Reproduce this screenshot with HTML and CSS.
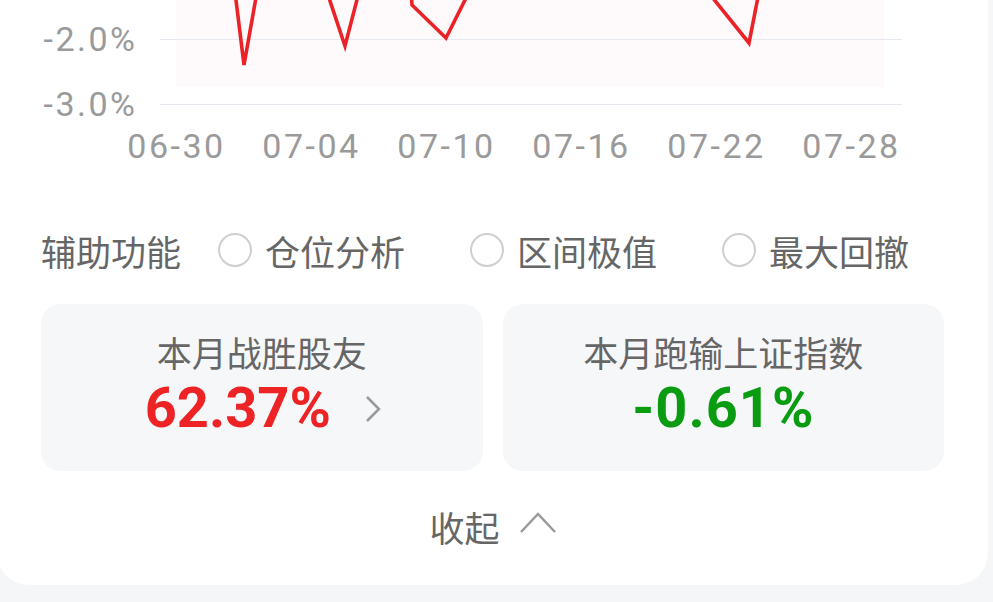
FILE: index.html
```html
<!DOCTYPE html>
<html lang="zh-CN">

<head>
    <meta charset="UTF-8">
    <meta name="viewport" content="width=device-width, initial-scale=1.0">
    <title>本月收益</title>
    <link rel="stylesheet" href="styles.css">
</head>

<body>
    <div class="panel">
        <div class="chart">
            <div class="yaxis">
                <span>-2.0%</span>
                <span>-3.0%</span>
            </div>
            <svg class="plot" width="742" height="118" viewBox="0 0 742 118">
                <rect x="16" y="0" width="708" height="87" fill="#fefafb" />
                <line x1="0" y1="39.5" x2="742" y2="39.5" stroke="#e6e8ef" stroke-width="1" />
                <line x1="0" y1="104.5" x2="742" y2="104.5" stroke="#e6e8ef" stroke-width="1" />
                <g fill="none" stroke="#ea2328" stroke-width="3.6" stroke-linejoin="miter">
                    <polyline points="75,-8 84,65 97,-8" />
                    <polyline points="167,-8 185,46 199,-8" />
                    <polyline points="251,-8 252,5 286,38 309,-8" />
                    <polyline points="548,-8 589,43 599,-8" />
                </g>
            </svg>
        </div>
        <div class="xaxis">
            <span>06-30</span>
            <span>07-04</span>
            <span>07-10</span>
            <span>07-16</span>
            <span>07-22</span>
            <span>07-28</span>
        </div>

        <div class="tools">
            <span class="tools_label">辅助功能</span>
            <label class="option"><i class="radio"></i>仓位分析</label>
            <label class="option"><i class="radio"></i>区间极值</label>
            <label class="option"><i class="radio"></i>最大回撤</label>
        </div>

        <div class="stats">
            <div class="stat">
                <div class="stat_title">本月战胜股友</div>
                <div class="stat_value up">
                    62.37%
                    <svg class="arrow" width="16" height="28" viewBox="0 0 16 28">
                        <polyline points="2,2 14,14 2,26" fill="none" stroke="#999" stroke-width="2.5" />
                    </svg>
                </div>
            </div>
            <div class="stat">
                <div class="stat_title">本月跑输上证指数</div>
                <div class="stat_value down">-0.61%</div>
            </div>
        </div>

        <div class="fold">
            收起
            <svg width="36" height="22" viewBox="0 0 36 22">
                <polyline points="1,20 18,2 35,20" fill="none" stroke="#999" stroke-width="2.5" />
            </svg>
        </div>
    </div>
</body>

</html>
```

FILE: styles.css
```css
* {
    margin: 0;
    padding: 0;
    box-sizing: border-box;
}

body {
    background-color: #f5f6f8;
    font-family: "Noto Sans CJK SC", "Noto Sans", sans-serif;
    overflow: hidden;
}

.panel {
    width: 991px;
    margin-left: -3px;
    padding: 0 44px 34px;
    background-color: #fff;
    border-radius: 0 0 32px 32px;
}

/* chart */

.chart {
    display: flex;
    height: 118px;
}

.yaxis {
    width: 94px;
    padding-top: 6.5px;
    display: flex;
    flex-direction: column;
    align-items: flex-end;
    font-family: Roboto, sans-serif;
    font-size: 34px;
    letter-spacing: 2.5px;
    color: #9a9a9a;
}

.yaxis span {
    line-height: 65px;
    margin-right: -2.5px;
}

.plot {
    display: block;
    margin-left: 25px;
    overflow: visible;
}

.xaxis {
    display: flex;
    padding-left: 68px;
    font-family: Roboto, sans-serif;
    font-size: 34px;
    letter-spacing: 2.5px;
    color: #9a9a9a;
}

.xaxis span {
    width: 135px;
    flex-shrink: 0;
    line-height: 56px;
    text-align: center;
}

/* options */

.tools {
    display: flex;
    align-items: center;
    height: 50px;
    margin-top: 51px;
    font-size: 35px;
    color: #666;
}

.tools_label {
    width: 177px;
    flex-shrink: 0;
}

.option {
    width: 252px;
    flex-shrink: 0;
    display: flex;
    align-items: center;
}

.option:last-child {
    width: auto;
}

.radio {
    width: 34px;
    height: 34px;
    margin-right: 13px;
    border: 2px solid #cfcfcf;
    border-radius: 50%;
}

/* cards */

.stats {
    display: flex;
    gap: 20px;
    margin-top: 29px;
}

.stat {
    flex: 1;
    height: 167px;
    padding-top: 26px;
    background-color: #f6f7f9;
    border-radius: 20px;
    text-align: center;
}

.stat_title {
    font-size: 35px;
    line-height: 44px;
    color: #666;
}

.stat_value {
    display: flex;
    justify-content: center;
    align-items: center;
    gap: 34px;
    margin-top: 2px;
    font-family: Roboto, sans-serif;
    font-weight: bold;
    font-size: 56px;
    line-height: 64px;
}

.stat_value.up {
    color: #ee2326;
    padding-left: 2px;
}

.stat_value.down {
    color: #0a9c10;
    letter-spacing: 1px;
}

.arrow {
    margin-top: 2px;
}

/* fold */

.fold {
    display: flex;
    justify-content: center;
    align-items: center;
    gap: 20px;
    height: 50px;
    margin-top: 30px;
    font-size: 35px;
    color: #666;
}

.fold svg {
    margin-top: -6px;
}
```
